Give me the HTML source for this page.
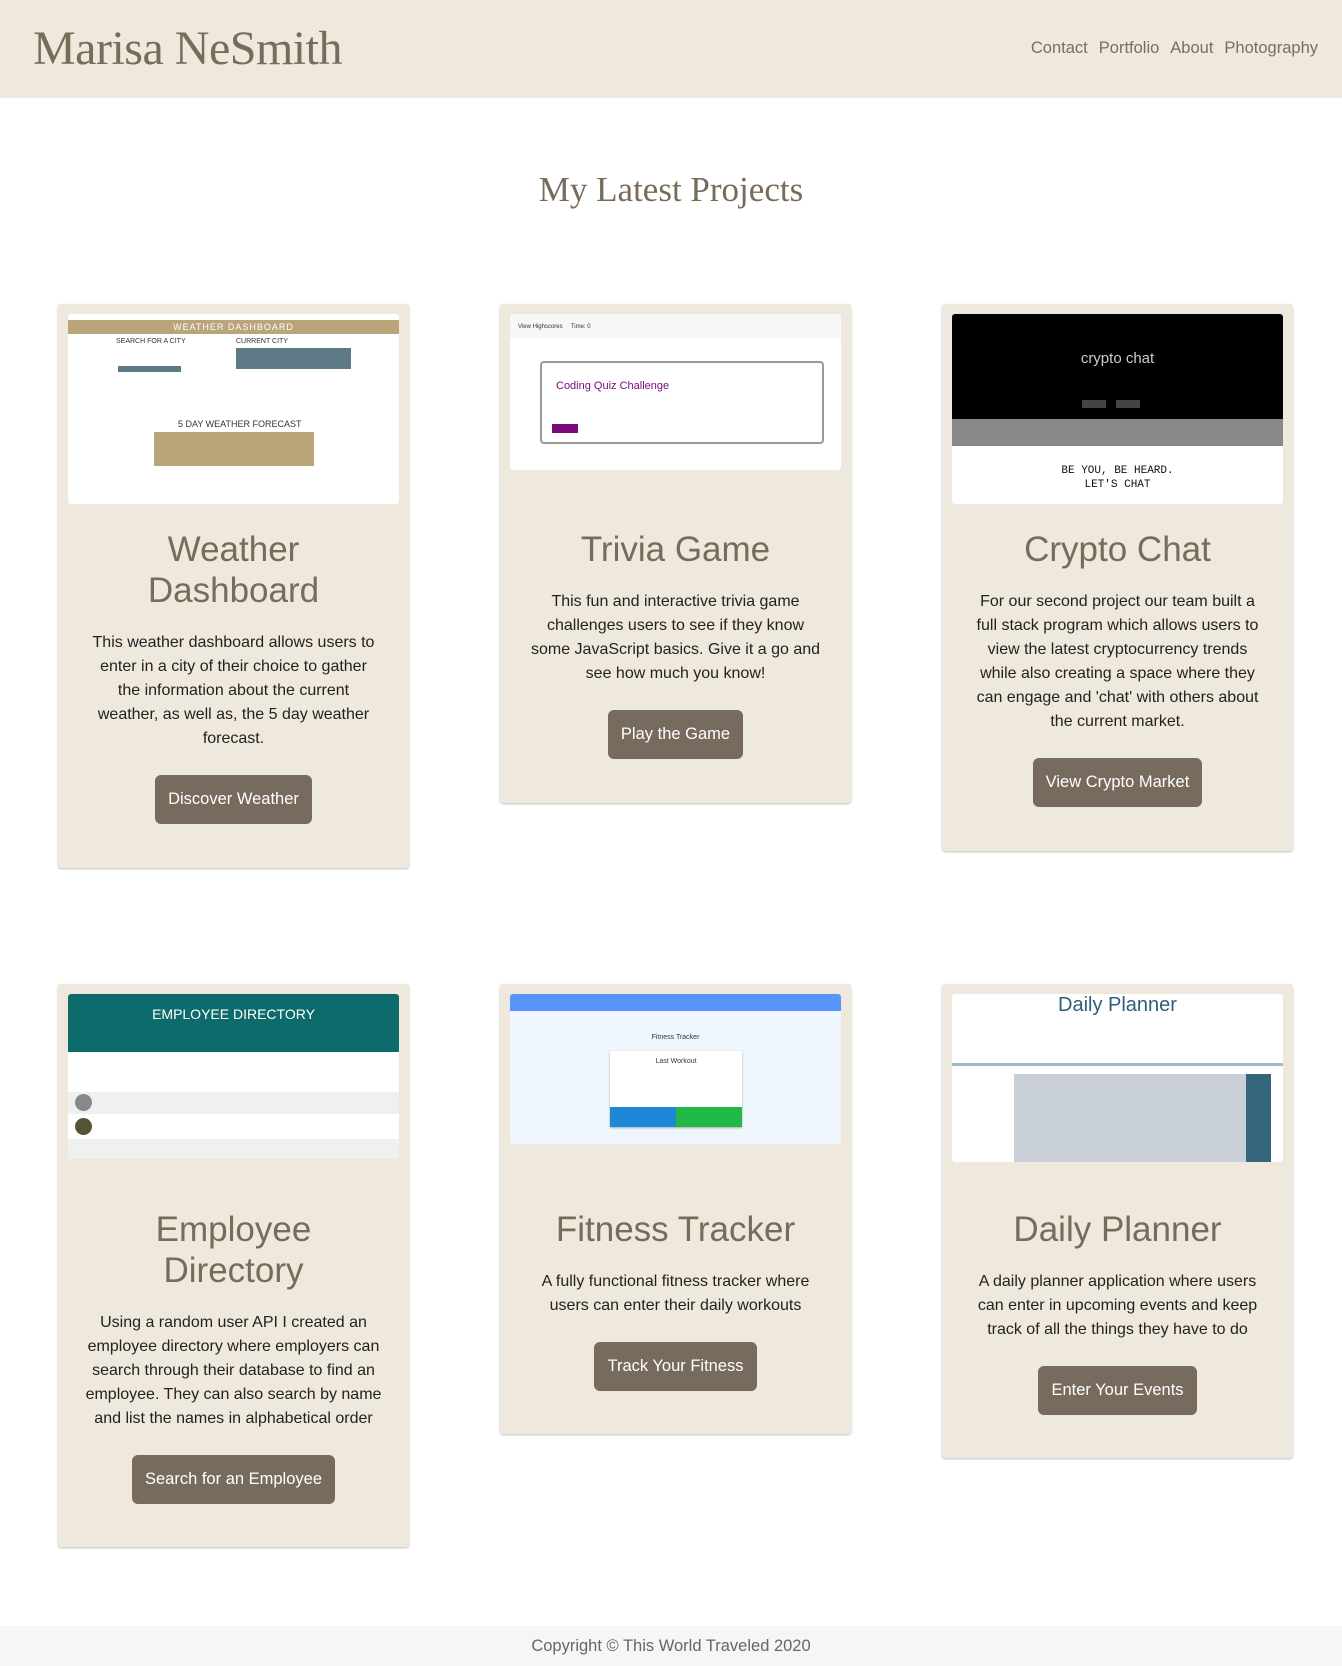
<!DOCTYPE html>
<html><head><meta charset="utf-8"><style>
*{box-sizing:border-box;margin:0;padding:0}
body{width:1342px;height:1666px;background:#fff;font-family:"Liberation Sans",sans-serif;position:relative;overflow:hidden}
header{height:98px;background:#efe8dc;position:relative}
header h1{position:absolute;left:33px;top:21px;font-family:"Liberation Serif",serif;font-weight:normal;font-size:48px;color:#776b5a;letter-spacing:-0.5px}
nav{position:absolute;right:24px;top:39px;font-size:16.5px;color:#7a6e5d}
nav span{margin-left:11px}
h2{position:absolute;top:170px;width:100%;text-align:center;font-family:"Liberation Serif",serif;font-weight:normal;font-size:35px;color:#776b5a}
.card{position:absolute;width:351px;background:#efe8dc;border-radius:3px;box-shadow:0 1px 2px rgba(0,0,0,.25);padding:10px 10px 0;text-align:center}
.box{height:190px}
.img{background:#fff;border-radius:3px;overflow:hidden;position:relative;text-align:left}
.card h3{font-weight:normal;font-size:35px;line-height:41px;color:#776b5a;margin:25px 20px 0}
.card p{font-size:16px;line-height:24px;color:#222;margin:20px -5px 0;white-space:nowrap}
.btn{display:inline-block;background:#776b5d;color:#fff;font-size:16.5px;line-height:49px;padding:0 13px;border-radius:6px;margin-top:24px}
footer{position:absolute;top:1626px;left:0;width:100%;height:40px;background:#f6f6f6;text-align:center;font-size:16.5px;line-height:40px;color:#666}
.t{position:absolute;font-size:7px;color:#333}
</style></head><body>
<header><h1>Marisa NeSmith</h1><nav><span>Contact</span><span>Portfolio</span><span>About</span><span>Photography</span></nav></header>
<h2>My Latest Projects</h2>

<div class="card" style="left:58px;top:304px;height:564px">
<div class="box"><div class="img" style="height:190px">
<div style="position:absolute;left:0;top:6px;width:100%;height:14px;background:#baa47a;color:#fff;font-size:9px;text-align:center;line-height:14px;letter-spacing:1px">WEATHER DASHBOARD</div>
<div class="t" style="left:48px;top:24px">SEARCH FOR A CITY</div>
<div class="t" style="left:168px;top:24px">CURRENT CITY</div>
<div style="position:absolute;left:168px;top:34px;width:115px;height:21px;background:#5f7a87"></div>
<div style="position:absolute;left:50px;top:52px;width:63px;height:6px;background:#5f7a87"></div>
<div class="t" style="left:110px;top:105px;font-size:9px">5 DAY WEATHER FORECAST</div>
<div style="position:absolute;left:86px;top:118px;width:160px;height:34px;background:#baa47a"></div>
</div></div>
<h3>Weather Dashboard</h3>
<p>This weather dashboard allows users to<br>enter in a city of their choice to gather<br>the information about the current<br>weather, as well as, the 5 day weather<br>forecast.</p>
<span class="btn">Discover Weather</span>
</div>

<div class="card" style="left:500px;top:304px;height:499px">
<div class="box"><div class="img" style="height:156px">
<div style="position:absolute;left:0;top:0;width:100%;height:24px;background:#f7f7f7"></div>
<div class="t" style="left:8px;top:10px;font-size:6px">View Highscores &nbsp; &nbsp; Time: 0</div>
<div style="position:absolute;left:30px;top:47px;width:284px;height:83px;border:2px solid #999;border-radius:4px"></div>
<div style="position:absolute;left:46px;top:66px;font-size:11px;color:#7a0a7a">Coding Quiz Challenge</div>
<div style="position:absolute;left:42px;top:110px;width:26px;height:9px;background:#7a0a7a"></div>
</div></div>
<h3>Trivia Game</h3>
<p>This fun and interactive trivia game<br>challenges users to see if they know<br>some JavaScript basics. Give it a go and<br>see how much you know!</p>
<span class="btn">Play the Game</span>
</div>

<div class="card" style="left:942px;top:304px;height:547px">
<div class="box"><div class="img" style="height:190px">
<div style="position:absolute;left:0;top:0;width:100%;height:105px;background:#000"></div>
<div style="position:absolute;left:0;top:105px;width:100%;height:27px;background:#888"></div>
<div style="position:absolute;left:0;top:36px;width:100%;text-align:center;color:#ccc;font-size:15px">crypto chat</div>
<div style="position:absolute;left:130px;top:86px;width:24px;height:8px;background:#444"></div>
<div style="position:absolute;left:164px;top:86px;width:24px;height:8px;background:#444"></div>
<div style="position:absolute;left:0;top:150px;width:100%;text-align:center;font-family:'Liberation Mono',monospace;font-size:11px;line-height:14px;color:#111">BE YOU, BE HEARD.<br>LET'S CHAT</div>
</div></div>
<h3>Crypto Chat</h3>
<p>For our second project our team built a<br>full stack program which allows users to<br>view the latest cryptocurrency trends<br>while also creating a space where they<br>can engage and 'chat' with others about<br>the current market.</p>
<span class="btn">View Crypto Market</span>
</div>

<div class="card" style="left:58px;top:984px;height:563px">
<div class="box"><div class="img" style="height:165px">
<div style="position:absolute;left:0;top:0;width:100%;height:58px;background:#0e6b6b;color:#fff;text-align:center;font-size:14px;padding-top:12px">EMPLOYEE DIRECTORY</div>
<div style="position:absolute;left:0;top:98px;width:100%;height:22px;background:#f0f0f0"></div>
<div style="position:absolute;left:0;top:145px;width:100%;height:20px;background:#f0f0f0"></div>
<div style="position:absolute;left:7px;top:100px;width:17px;height:17px;border-radius:50%;background:#888"></div>
<div style="position:absolute;left:7px;top:124px;width:17px;height:17px;border-radius:50%;background:#553"></div>
</div></div>
<h3>Employee Directory</h3>
<p>Using a random user API I created an<br>employee directory where employers can<br>search through their database to find an<br>employee. They can also search by name<br>and list the names in alphabetical order</p>
<span class="btn">Search for an Employee</span>
</div>

<div class="card" style="left:500px;top:984px;height:450px">
<div class="box"><div class="img" style="height:150px;background:#eff6fe">
<div style="position:absolute;left:0;top:0;width:100%;height:17px;background:#5895fb"></div>
<div class="t" style="left:0;width:100%;text-align:center;top:40px">Fitness Tracker</div>
<div style="position:absolute;left:100px;top:57px;width:132px;height:76px;background:#fff;box-shadow:0 1px 2px #aaa"></div>
<div class="t" style="left:100px;width:132px;text-align:center;top:64px">Last Workout</div>
<div style="position:absolute;left:100px;top:113px;width:66px;height:20px;background:#1f88d6"></div>
<div style="position:absolute;left:166px;top:113px;width:66px;height:20px;background:#21b846"></div>
</div></div>
<h3>Fitness Tracker</h3>
<p>A fully functional fitness tracker where<br>users can enter their daily workouts</p>
<span class="btn">Track Your Fitness</span>
</div>

<div class="card" style="left:942px;top:984px;height:474px">
<div class="box"><div class="img" style="height:168px">
<div style="position:absolute;left:0;top:0;width:100%;text-align:center;color:#2d5f7a;font-size:20px">Daily Planner</div>
<div style="position:absolute;left:0;top:69px;width:100%;height:3px;background:#9fbcc4"></div>
<div style="position:absolute;left:62px;top:80px;width:232px;height:88px;background:#c8cfd6"></div>
<div style="position:absolute;left:294px;top:80px;width:25px;height:88px;background:#36667e"></div>
</div></div>
<h3>Daily Planner</h3>
<p>A daily planner application where users<br>can enter in upcoming events and keep<br>track of all the things they have to do</p>
<span class="btn">Enter Your Events</span>
</div>

<footer>Copyright © This World Traveled 2020</footer>
</body></html>
